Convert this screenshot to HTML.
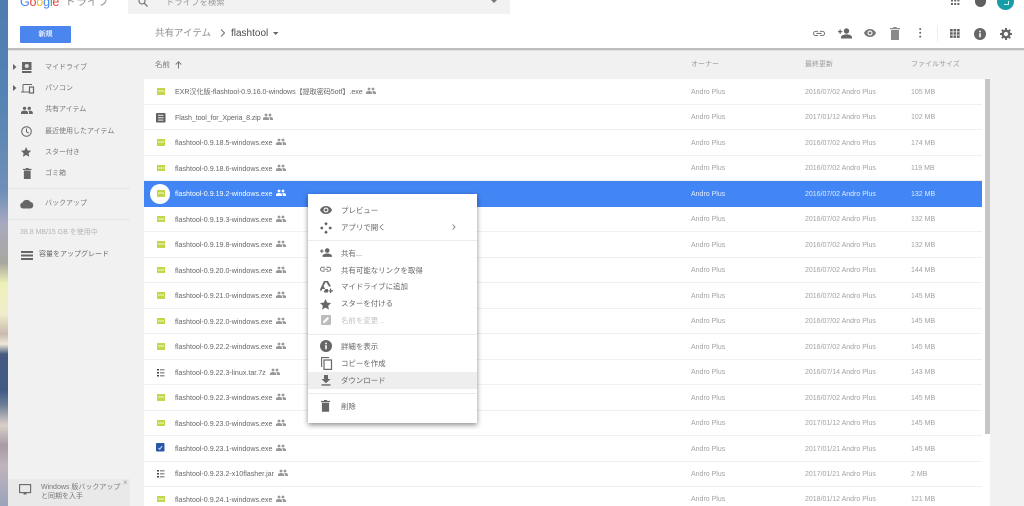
<!DOCTYPE html>
<html lang="ja">
<head>
<meta charset="utf-8">
<title>flashtool - Google ドライブ</title>
<style>
html,body{margin:0;padding:0;width:1024px;height:506px;overflow:hidden;background:#f1f1f1}
body{position:relative;font-family:"Liberation Sans","Noto Sans CJK JP",sans-serif;color:#666;font-size:8px}
#root{position:absolute;left:0;top:0;width:1024px;height:506px;overflow:hidden;filter:blur(.35px)}
.a{position:absolute;white-space:nowrap}
svg{position:absolute;overflow:visible}
.row{position:absolute;left:144px;width:838px;height:25.5px;border-bottom:1px solid #f0f0f0;box-sizing:border-box}
.n{position:absolute;left:31px;top:7px;font-size:7.1px;line-height:12px;color:#666;white-space:nowrap}
.o{position:absolute;left:547px;top:7.5px;font-size:7px;line-height:12px;color:#a2a2a2;white-space:nowrap}
.d{position:absolute;left:661px;top:7.5px;font-size:7px;line-height:12px;color:#a2a2a2;white-space:nowrap}
.s{position:absolute;left:767px;top:7.5px;font-size:7px;line-height:12px;color:#a2a2a2;white-space:nowrap}
.ic{position:absolute;left:13px;top:9px;width:8px;height:6.5px;background:#c3d64a}
.ic:after{content:"";position:absolute;left:1px;top:2px;width:6px;height:2px;background:#dbe88c}
.sh{position:absolute;top:8px;width:10px;height:7px}
.side{position:absolute;left:45px;font-size:7px;line-height:12px;color:#777;white-space:nowrap}
.m{position:absolute;left:341px;font-size:7.45px;line-height:12px;color:#666;white-space:nowrap}
</style>
</head>
<body>
<div id="root">
<svg width="0" height="0" style="position:absolute"><defs>
<g id="ppl"><circle cx="3" cy="2" r="1.4" fill="currentColor"/><circle cx="7" cy="2" r="1.4" fill="currentColor"/><path d="M0 7V5.600C0 4.600 1.600 4 3 4s3 .6 3 1.600V7zM7 4c1.400 0 3 .6 3 1.600V7H6.800V5.400C6.800 4.800 6.500 4.400 6 4.100z" fill="currentColor"/></g>
<g id="trash"><path d="M1 3h8v10H1zM0 1h3l.6-1h2.800l.6 1h3v1.300H0z" fill="currentColor"/></g>
<g id="star"><path d="M6 0l1.800 3.900 4.200.5-3.100 2.900.8 4.200L6 9.400 2.300 11.500l.8-4.200L0 4.400l4.200-.5z" fill="currentColor"/></g>
<g id="eye"><path d="M6 0C3.300 0 1 1.600 0 4c1 2.400 3.300 4 6 4s5-1.600 6-4c-1-2.400-3.300-4-6-4zm0 6.500A2.500 2.500 0 1 1 6 1.500a2.500 2.500 0 0 1 0 5z" fill="currentColor"/><circle cx="6" cy="4" r="1.400" fill="currentColor"/></g>
<g id="link"><path d="M3 1h3v1.200H3a1.800 1.800 0 0 0 0 3.600h3V7H3a3 3 0 0 1 0-6zm5 0h3a3 3 0 0 1 0 6H8V5.800h3a1.800 1.800 0 0 0 0-3.600H8zM4 3.400h6v1.200H4z" fill="currentColor"/></g>
<g id="addp"><circle cx="8.500" cy="3" r="2.700" fill="currentColor"/><path d="M3 10.500V9c0-1.700 3.600-2.600 5.500-2.600S14 7.300 14 9v1.500zM0 3h1.500V1.500h1.300V3h1.500v1.300H2.800v1.500H1.500V4.300H0z" fill="currentColor"/></g>
<g id="info"><circle cx="6" cy="6" r="6" fill="currentColor"/><rect x="5.200" y="5.200" width="1.600" height="4" fill="#fff"/><rect x="5.200" y="2.700" width="1.600" height="1.600" fill="#fff"/></g>
</defs></svg>

<!-- wallpaper strip -->
<div class="a" style="left:0;top:0;width:8px;height:506px;background:linear-gradient(180deg,#4f7cb0 0,#5583b4 20%,#6f8fb8 38%,#a8a8c0 44%,#a9a89e 52%,#eef0b8 56%,#f0eecb 62%,#c9b9b0 66%,#eee8d8 68%,#46597f 70%,#3f5a85 77%,#6d7d96 80%,#d9d0c8 84%,#a89aa6 88%,#c0b4bc 92%,#9aa4bc 100%)"></div>

<!-- header -->
<div class="a" style="left:8px;top:0;width:1016px;height:48px;background:#fff"></div>
<div class="a" style="left:8px;top:48px;width:1016px;height:2px;background:#bdbdbd"></div>
<div class="a" style="left:8px;top:50px;width:1016px;height:1px;background:#e2e2e2"></div>

<div class="a" style="left:20px;top:-6px;font-size:12.5px;line-height:16px;letter-spacing:-.2px"><span style="color:#4285f4">G</span><span style="color:#ea4335">o</span><span style="color:#fbbc05">o</span><span style="color:#4285f4">g</span><span style="color:#34a853">l</span><span style="color:#ea4335">e</span></div>
<div class="a" style="left:65px;top:-4px;font-size:11px;line-height:12px;color:#8f8f8f">ドライブ</div>

<div class="a" style="left:128px;top:0;width:382px;height:14px;background:#f2f2f2"></div>
<svg style="left:138px;top:-3px" width="10" height="10" viewBox="0 0 10 10"><circle cx="4" cy="4" r="3" fill="none" stroke="#777" stroke-width="1.200"/><path d="M6.200 6.200L9.500 9.500" stroke="#777" stroke-width="1.300"/></svg>
<div class="a" style="left:166px;top:-4px;font-size:8.4px;line-height:12px;color:#9a9a9a">ドライブを検索</div>
<svg style="left:491px;top:0" width="7" height="4"><path d="M0 0h6L3 3z" fill="#777"/></svg>

<!-- top right -->
<svg style="left:951px;top:0" width="9" height="5"><g fill="#666"><rect x="0" y="0" width="2" height="1.500"/><rect x="3.200" y="0" width="2" height="1.500"/><rect x="6.400" y="0" width="2" height="1.500"/><rect x="0" y="3" width="2" height="2"/><rect x="3.200" y="3" width="2" height="2"/><rect x="6.400" y="3" width="2" height="2"/></g></svg>
<div class="a" style="left:975px;top:-5px;width:11px;height:12px;border-radius:6px;background:#5f5f5f"></div>
<div class="a" style="left:997px;top:-7px;width:17px;height:17px;border-radius:50%;background:#159da8"></div>
<div class="a" style="left:1004px;top:1px;width:4px;height:3px;border-right:1px solid #cfeff1;border-bottom:1px solid #cfeff1"></div>

<!-- new button -->
<div class="a" style="left:20px;top:26px;width:51px;height:17px;background:#4a86ee;border-radius:1px;color:#e6efff;font-size:7px;line-height:17.5px;text-align:center;font-weight:700">新規</div>

<!-- breadcrumb -->
<div class="a" style="left:155px;top:27px;font-size:9.5px;line-height:14px;color:#8f8f8f">共有アイテム</div>
<svg style="left:220px;top:29px" width="6" height="9"><path d="M1 .5L4.500 4 1 7.500" fill="none" stroke="#777" stroke-width="1.100"/></svg>
<div class="a" style="left:231px;top:27px;font-size:10px;line-height:14px;color:#4a4a4a">flashtool</div>
<svg style="left:273px;top:32px" width="6" height="4"><path d="M0 0h5.500L2.700 3z" fill="#666"/></svg>

<!-- toolbar -->
<svg style="left:813px;top:29.5px;color:#777" width="12" height="7"><use href="#link" transform="scale(.86)"/></svg>
<svg style="left:838px;top:28px;color:#666" width="14" height="11"><use href="#addp"/></svg>
<svg style="left:864px;top:29px;color:#777" width="12" height="8"><use href="#eye"/></svg>
<svg style="left:890px;top:27px;color:#8a8a8a" width="10" height="13"><use href="#trash"/></svg>
<svg style="left:919px;top:28px" width="3" height="10"><g fill="#666"><circle cx="1.200" cy="1" r="1"/><circle cx="1.200" cy="4.800" r="1"/><circle cx="1.200" cy="8.600" r="1"/></g></svg>
<div class="a" style="left:937px;top:25px;width:1px;height:17px;background:#eee"></div>
<svg style="left:950px;top:29px" width="10" height="9"><g fill="#666"><rect width="2.700" height="2.500"/><rect x="3.500" width="2.700" height="2.500"/><rect x="7" width="2.700" height="2.500"/><rect y="3.200" width="2.700" height="2.500"/><rect x="3.500" y="3.200" width="2.700" height="2.500"/><rect x="7" y="3.200" width="2.700" height="2.500"/><rect y="6.400" width="2.700" height="2.500"/><rect x="3.500" y="6.400" width="2.700" height="2.500"/><rect x="7" y="6.400" width="2.700" height="2.500"/></g></svg>
<svg style="left:974px;top:28px;color:#666" width="12" height="12"><use href="#info"/></svg>
<svg style="left:1000px;top:28px" width="12" height="12" viewBox="0 0 12 12"><circle cx="6" cy="6" r="3.300" fill="none" stroke="#666" stroke-width="2.400"/><g stroke="#666" stroke-width="2"><path d="M6 0v2M6 10v2M0 6h2M10 6h2M1.800 1.800l1.400 1.400M8.800 8.800l1.400 1.400M1.800 10.200l1.400-1.400M8.800 3.200l1.400-1.400"/></g></svg>

<!-- sidebar -->
<svg style="left:13px;top:64px" width="4" height="6"><path d="M0 0l3.500 3L0 6z" fill="#666"/></svg>
<svg style="left:21px;top:62px" width="12" height="11"><path d="M1 0h9.500v8H1zM1 9h9.500v2H1z" fill="#666"/><circle cx="5.800" cy="4" r="2" fill="#ddd"/></svg>
<div class="side" style="top:62px">マイドライブ</div>
<svg style="left:13px;top:85px" width="4" height="6"><path d="M0 0l3.500 3L0 6z" fill="#666"/></svg>
<svg style="left:21px;top:84px" width="13" height="9"><path d="M2 .5h9M2 .5v7M0 8h8" stroke="#666" fill="none" stroke-width="1"/><rect x="8.500" y="3" width="4" height="6" fill="none" stroke="#666" stroke-width="1.200"/></svg>
<div class="side" style="top:83px">パソコン</div>
<svg style="left:21px;top:106px;color:#666" width="12" height="8"><use href="#ppl" transform="scale(1.180 1.150)"/></svg>
<div class="side" style="top:104px">共有アイテム</div>
<svg style="left:21px;top:125.5px" width="12" height="12"><circle cx="5.500" cy="5.500" r="4.800" fill="none" stroke="#666" stroke-width="1"/><path d="M5.500 2.500v3.300l2.200 1.300" fill="none" stroke="#666"/></svg>
<div class="side" style="top:126px">最近使用したアイテム</div>
<svg style="left:21px;top:147px;color:#666" width="12" height="12"><use href="#star" transform="scale(.85)"/></svg>
<div class="side" style="top:147px">スター付き</div>
<svg style="left:23px;top:167.5px;color:#666" width="10" height="12"><use href="#trash" transform="scale(.85)"/></svg>
<div class="side" style="top:168px">ゴミ箱</div>
<div class="a" style="left:8px;top:188px;width:122px;height:1px;background:#e6e6e6"></div>
<svg style="left:20px;top:199px" width="14" height="10"><path d="M3 9.500A3 3 0 0 1 2.500 3.600 4.500 4.500 0 0 1 10.500 3 3.300 3.300 0 0 1 10.500 9.500z" fill="#666"/></svg>
<div class="side" style="top:198px">バックアップ</div>
<div class="a" style="left:8px;top:219px;width:122px;height:1px;background:#e6e6e6"></div>
<div class="a" style="left:20px;top:227px;font-size:7px;line-height:12px;color:#b4b4b4">38.8 MB/15 GB を使用中</div>
<svg style="left:21px;top:250.5px" width="12" height="9"><g fill="#666"><rect width="12" height="2"/><rect y="3.500" width="12" height="2"/><rect y="7" width="12" height="2"/></g></svg>
<div class="a" style="left:39px;top:249px;font-size:7px;line-height:12px;color:#666">容量をアップグレード</div>

<div class="a" style="left:8px;top:479px;width:122px;height:27px;background:#e9e9e9"></div>
<svg style="left:19px;top:484px" width="13" height="12"><rect x=".6" y=".6" width="11" height="8" fill="none" stroke="#666" stroke-width="1.100"/><path d="M4.500 9h3v1.500h-3z" fill="#666"/></svg>
<div class="a" style="left:41px;top:484px;font-size:7px;line-height:8.5px;color:#777">Windows 版バックアップ<br>と同期を入手</div>
<div class="a" style="left:123px;top:478px;font-size:8px;line-height:10px;color:#999">×</div>

<!-- list header -->
<div class="a" style="left:155px;top:59px;font-size:7.5px;line-height:12px;color:#777">名前</div>
<svg style="left:175px;top:61px" width="7" height="8"><path d="M3.500 7.500V1M.7 3.500L3.500.8 6.300 3.500" fill="none" stroke="#777"/></svg>
<div class="a" style="left:691px;top:59px;font-size:7px;line-height:12px;color:#999">オーナー</div>
<div class="a" style="left:805px;top:59px;font-size:7px;line-height:12px;color:#999">最終更新</div>
<div class="a" style="left:911px;top:59px;font-size:7px;line-height:12px;color:#999">ファイルサイズ</div>

<!-- list -->
<div class="a" style="left:144px;top:79px;width:846px;height:427px;background:#fff"></div>
<div class="a" style="left:985px;top:79px;width:5px;height:355px;background:#c6c6c6"></div>

<div class="row" style="top:79px"><div class="ic"></div><div class="n" style="letter-spacing:-.05px">EXR汉化版-flashtool-0.9.16.0-windows【提取密码5otf】.exe</div><svg class="sh" style="left:222px;color:#999" width="10" height="7"><use href="#ppl"/></svg><div class="o">Andro Plus</div><div class="d">2016/07/02 Andro Plus</div><div class="s">105 MB</div></div>

<div class="row" style="top:104.500px"><svg style="left:12px;top:8px" width="10" height="10"><rect width="9.500" height="9.500" rx="1" fill="#5f5f5f"/><path d="M2 2.300h5.500M2 4.700h5.500M2 7.100h5.500" stroke="#eee" stroke-width="1"/></svg><div class="n" style="letter-spacing:-.1px">Flash_tool_for_Xperia_8.zip</div><svg class="sh" style="left:119px;color:#999" width="10" height="7"><use href="#ppl"/></svg><div class="o">Andro Plus</div><div class="d">2017/01/12 Andro Plus</div><div class="s">102 MB</div></div>

<div class="row" style="top:130px"><div class="ic"></div><div class="n">flashtool-0.9.18.5-windows.exe</div><svg class="sh" style="left:132px;color:#999" width="10" height="7"><use href="#ppl"/></svg><div class="o">Andro Plus</div><div class="d">2016/07/02 Andro Plus</div><div class="s">174 MB</div></div>

<div class="row" style="top:155.500px"><div class="ic"></div><div class="n">flashtool-0.9.18.6-windows.exe</div><svg class="sh" style="left:132px;color:#999" width="10" height="7"><use href="#ppl"/></svg><div class="o">Andro Plus</div><div class="d">2016/07/02 Andro Plus</div><div class="s">119 MB</div></div>

<div class="row" style="top:181px;background:#4285f4;border-bottom:0"><div class="a" style="left:6px;top:2.500px;width:20px;height:20px;border-radius:50%;background:#fff"></div><div class="ic"></div><div class="n" style="color:#fff">flashtool-0.9.19.2-windows.exe</div><svg class="sh" style="left:132px;color:#fff" width="10" height="7"><use href="#ppl"/></svg><div class="o" style="color:#e4edff">Andro Plus</div><div class="d" style="color:#e4edff">2016/07/02 Andro Plus</div><div class="s" style="color:#e4edff">132 MB</div></div>

<div class="row" style="top:206.500px"><div class="ic"></div><div class="n">flashtool-0.9.19.3-windows.exe</div><svg class="sh" style="left:132px;color:#999" width="10" height="7"><use href="#ppl"/></svg><div class="o">Andro Plus</div><div class="d">2016/07/02 Andro Plus</div><div class="s">132 MB</div></div>

<div class="row" style="top:232px"><div class="ic"></div><div class="n">flashtool-0.9.19.8-windows.exe</div><svg class="sh" style="left:132px;color:#999" width="10" height="7"><use href="#ppl"/></svg><div class="o">Andro Plus</div><div class="d">2016/07/02 Andro Plus</div><div class="s">132 MB</div></div>

<div class="row" style="top:257.500px"><div class="ic"></div><div class="n">flashtool-0.9.20.0-windows.exe</div><svg class="sh" style="left:132px;color:#999" width="10" height="7"><use href="#ppl"/></svg><div class="o">Andro Plus</div><div class="d">2016/07/02 Andro Plus</div><div class="s">144 MB</div></div>

<div class="row" style="top:283px"><div class="ic"></div><div class="n">flashtool-0.9.21.0-windows.exe</div><svg class="sh" style="left:132px;color:#999" width="10" height="7"><use href="#ppl"/></svg><div class="o">Andro Plus</div><div class="d">2016/07/02 Andro Plus</div><div class="s">145 MB</div></div>

<div class="row" style="top:308.500px"><div class="ic"></div><div class="n">flashtool-0.9.22.0-windows.exe</div><svg class="sh" style="left:132px;color:#999" width="10" height="7"><use href="#ppl"/></svg><div class="o">Andro Plus</div><div class="d">2016/07/02 Andro Plus</div><div class="s">145 MB</div></div>

<div class="row" style="top:334px"><div class="ic"></div><div class="n">flashtool-0.9.22.2-windows.exe</div><svg class="sh" style="left:132px;color:#999" width="10" height="7"><use href="#ppl"/></svg><div class="o">Andro Plus</div><div class="d">2016/07/02 Andro Plus</div><div class="s">145 MB</div></div>

<div class="row" style="top:359.500px"><svg style="left:13px;top:9px" width="8" height="8"><g fill="#444"><rect width="2" height="1.500"/><rect y="3" width="2" height="1.500"/><rect y="6" width="2" height="1.500"/></g><g fill="#999"><rect x="3" width="4.500" height="1.500"/><rect x="3" y="3" width="4.500" height="1.500"/><rect x="3" y="6" width="4.500" height="1.500"/></g></svg><div class="n">flashtool-0.9.22.3-linux.tar.7z</div><svg class="sh" style="left:126px;color:#999" width="10" height="7"><use href="#ppl"/></svg><div class="o">Andro Plus</div><div class="d">2016/07/14 Andro Plus</div><div class="s">143 MB</div></div>

<div class="row" style="top:385px"><div class="ic"></div><div class="n">flashtool-0.9.22.3-windows.exe</div><svg class="sh" style="left:132px;color:#999" width="10" height="7"><use href="#ppl"/></svg><div class="o">Andro Plus</div><div class="d">2016/07/02 Andro Plus</div><div class="s">145 MB</div></div>

<div class="row" style="top:410.500px"><div class="ic"></div><div class="n">flashtool-0.9.23.0-windows.exe</div><svg class="sh" style="left:132px;color:#999" width="10" height="7"><use href="#ppl"/></svg><div class="o">Andro Plus</div><div class="d">2017/01/12 Andro Plus</div><div class="s">145 MB</div></div>

<div class="row" style="top:436px"><svg style="left:12px;top:7px" width="9" height="9"><rect width="8.500" height="8.500" rx="1" fill="#2a56a8"/><path d="M2.500 5l1.200 1.200L6.200 3" fill="none" stroke="#cfe0ff" stroke-width="1"/></svg><div class="n">flashtool-0.9.23.1-windows.exe</div><svg class="sh" style="left:132px;color:#999" width="10" height="7"><use href="#ppl"/></svg><div class="o">Andro Plus</div><div class="d">2017/01/21 Andro Plus</div><div class="s">145 MB</div></div>

<div class="row" style="top:461px"><svg style="left:13px;top:9px" width="8" height="8"><g fill="#444"><rect width="2" height="1.500"/><rect y="3" width="2" height="1.500"/><rect y="6" width="2" height="1.500"/></g><g fill="#999"><rect x="3" width="4.500" height="1.500"/><rect x="3" y="3" width="4.500" height="1.500"/><rect x="3" y="6" width="4.500" height="1.500"/></g></svg><div class="n">flashtool-0.9.23.2-x10flasher.jar</div><svg class="sh" style="left:134px;color:#999" width="10" height="7"><use href="#ppl"/></svg><div class="o">Andro Plus</div><div class="d">2017/01/21 Andro Plus</div><div class="s">2 MB</div></div>

<div class="row" style="top:486.500px;border-bottom:0"><div class="ic"></div><div class="n">flashtool-0.9.24.1-windows.exe</div><svg class="sh" style="left:132px;color:#999" width="10" height="7"><use href="#ppl"/></svg><div class="o">Andro Plus</div><div class="d">2018/01/12 Andro Plus</div><div class="s">121 MB</div></div>

<!-- context menu -->
<div class="a" style="left:308px;top:194px;width:169px;height:229px;background:#fff;box-shadow:0 2px 5px rgba(0,0,0,.45)"></div>
<div class="a" style="left:308px;top:240px;width:169px;height:1px;background:#ececec"></div>
<div class="a" style="left:308px;top:334px;width:169px;height:1px;background:#ececec"></div>
<div class="a" style="left:308px;top:393px;width:169px;height:1px;background:#ececec"></div>
<div class="a" style="left:308px;top:372px;width:169px;height:17px;background:#eeeeee"></div>

<svg style="left:320px;top:206px;color:#666" width="12" height="8"><use href="#eye"/></svg>
<div class="m" style="top:205px">プレビュー</div>
<svg style="left:320px;top:221.5px" width="12" height="12" viewBox="0 0 12 12"><g fill="#666"><path d="M6 0l1.800 1.800L6 3.600 4.200 1.800zM6 8.400l1.800 1.800L6 12l-1.800-1.800zM1.800 4.200L3.600 6 1.800 7.800 0 6zM10.200 4.200L12 6l-1.800 1.800L8.400 6z"/></g></svg>
<div class="m" style="top:222px">アプリで開く</div>
<svg style="left:452px;top:224px" width="4" height="6"><path d="M.6 .5L3 3 .6 5.500" fill="none" stroke="#777" stroke-width=".9"/></svg>

<svg style="left:320px;top:248px;color:#666" width="13" height="10"><use href="#addp" transform="scale(.85)"/></svg>
<div class="m" style="top:248px">共有...</div>
<svg style="left:320px;top:266px;color:#777" width="11" height="7"><use href="#link" transform="scale(.8)"/></svg>
<div class="m" style="top:265px">共有可能なリンクを取得</div>
<svg style="left:320px;top:281px" width="13" height="12" viewBox="0 0 13 12"><path d="M4 0h4l3 5.500H9L6 .8 3.500 5 5.200 8H2.300L1 10.500 0 8.500z" fill="#666"/><path d="M3.800 10.500L5.400 8H8v3.500H4.500zM10 7.500h1.200v1.800H13v1.200h-1.800v1.500H10v-1.500H8.500V9.300H10z" fill="#666"/></svg>
<div class="m" style="top:281px">マイドライブに追加</div>
<svg style="left:320px;top:298.5px;color:#666" width="12" height="12"><use href="#star" transform="scale(.92)"/></svg>
<div class="m" style="top:298px">スターを付ける</div>
<svg style="left:321px;top:315px" width="11" height="11"><rect width="10" height="10" rx="1" fill="#bdbdbd"/><path d="M2 8l.3-1.800L6.500 2 8 3.500 3.800 7.700z" fill="#fff"/></svg>
<div class="m" style="top:315px;color:#c4c4c4">名前を変更...</div>

<svg style="left:320px;top:340px;color:#666" width="12" height="12"><use href="#info"/></svg>
<div class="m" style="top:341px">詳細を表示</div>
<svg style="left:321px;top:357px" width="12" height="13"><path d="M.6 10V.6h7.400" fill="none" stroke="#666" stroke-width="1.100"/><rect x="3" y="3" width="7.500" height="9.400" fill="none" stroke="#666" stroke-width="1.200"/></svg>
<div class="m" style="top:358px">コピーを作成</div>
<svg style="left:321px;top:375px" width="10" height="11"><path d="M3 0h4v4h2.500L5 8.200.5 4H3zM.5 9.300h9v1.300h-9z" fill="#666"/></svg>
<div class="m" style="top:375px">ダウンロード</div>
<svg style="left:321px;top:400px;color:#666" width="10" height="12"><use href="#trash" transform="scale(.9)"/></svg>
<div class="m" style="top:401px">削除</div>
</div>
</body>
</html>
